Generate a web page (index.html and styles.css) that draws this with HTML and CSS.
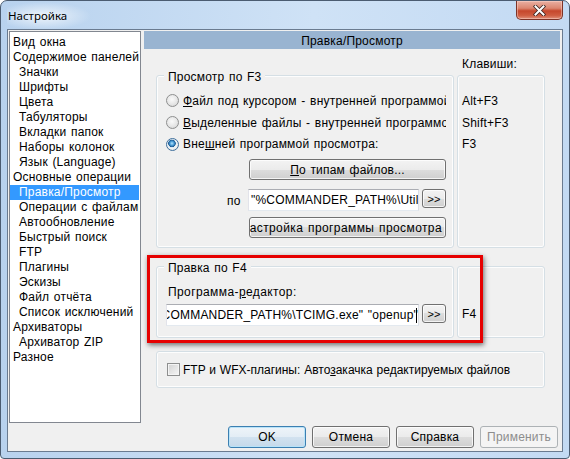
FILE: index.html
```html
<!DOCTYPE html>
<html>
<head>
  <meta charset="utf-8">
  <title>Настройка</title>
  <link rel="stylesheet" href="styles.css">
</head>
<body>

  <div class="window">
    <div class="titlebar">
      <span class="title">Настройка</span>
      <button class="close" title="Закрыть">
        <svg width="13" height="11" viewBox="0 0 13 11">
          <path d="M2.5 1.5 L10.5 9.5 M10.5 1.5 L2.5 9.5" stroke="#3a2420" stroke-width="3.6" stroke-linecap="square"/>
          <path d="M2.5 1.5 L10.5 9.5 M10.5 1.5 L2.5 9.5" stroke="#fff" stroke-width="2" stroke-linecap="square"/>
        </svg>
      </button>
    </div>

    <div class="client">
      <div class="main">
        <ul class="tree">
          <li>Вид окна</li>
          <li>Содержимое панелей</li>
          <li class="sub">Значки</li>
          <li class="sub">Шрифты</li>
          <li class="sub">Цвета</li>
          <li class="sub">Табуляторы</li>
          <li class="sub">Вкладки папок</li>
          <li class="sub">Наборы колонок</li>
          <li class="sub">Язык (Language)</li>
          <li>Основные операции</li>
          <li class="sub selected">Правка/Просмотр</li>
          <li class="sub">Операции с файлами</li>
          <li class="sub">Автообновление</li>
          <li class="sub">Быстрый поиск</li>
          <li class="sub">FTP</li>
          <li class="sub">Плагины</li>
          <li class="sub">Эскизы</li>
          <li class="sub">Файл отчёта</li>
          <li class="sub">Список исключений</li>
          <li>Архиваторы</li>
          <li class="sub">Архиватор ZIP</li>
          <li>Разное</li>
        </ul>

        <div class="page">
          <div class="page-head">Правка/Просмотр</div>

          <div class="page-body">
            <div class="keys-label">Клавиши:</div>

            <div class="group group-f3">
              <div class="group-title">Просмотр по F3</div>
              <div class="opt first"><span class="radio"></span><span><u>Ф</u>айл под курсором - внутренней программой</span></div>
              <div class="opt"><span class="radio"></span><span><u>В</u>ыделенные файлы - внутренней программой</span></div>
              <div class="opt"><span class="radio on"></span><span>Вне<u>ш</u>ней программой просмотра:</span></div>
              <button class="btn wide types"><u>П</u>о типам файлов...</button>
              <div class="path-row">
                <span class="by">по</span>
                <div class="edit edit-f3">"%COMMANDER_PATH%\Utilities\Universal Viewer\Viewer.exe"</div>
                <button class="btn more">&gt;&gt;</button>
              </div>
              <button class="btn wide clip"><span>Настройка программы просмотра</span></button>
            </div>

            <div class="keys keys-f3">
              <div>Alt+F3</div>
              <div>Shift+F3</div>
              <div>F3</div>
            </div>

            <div class="group group-f4">
              <div class="group-title">Правка по F4</div>
              <div class="f4-label">Программа-<u>р</u>едактор:</div>
              <div class="path-row">
                <div class="edit edit-f4"><span>"%COMMANDER_PATH%\TCIMG.exe" "openup"</span><span class="caret"></span></div>
                <button class="btn more">&gt;&gt;</button>
              </div>
            </div>

            <div class="keys keys-f4">
              <div>F4</div>
            </div>

            <div class="group group-ftp">
              <span class="check"></span>
              <span>FTP и WFX-плагины: Авто<u>з</u>акачка редактируемых файлов</span>
            </div>
          </div>
        </div>
      </div>

      <div class="buttons">
        <button class="btn default">OK</button>
        <button class="btn">Отмена</button>
        <button class="btn">Справка</button>
        <button class="btn" disabled>Применить</button>
      </div>
    </div>

    <!-- red frame drawn over the F4 section -->
    <div class="callout"></div>
  </div>

</body>
</html>
```

FILE: styles.css
```css
* {
  box-sizing: border-box;
}

body {
  margin: 0;
  background: #fff;
  font-family: "Liberation Sans", Arial, sans-serif;
  font-size: 12px;
  letter-spacing: 0.2px;
  word-spacing: 1px;
  color: #000;
}

u {
  text-decoration-thickness: 1px;
  text-underline-offset: 1px;
}

/* window frame */

.window {
  position: relative;
  width: 570px;
  height: 459px;
  display: flex;
  flex-direction: column;
  padding: 0 6px 6px;
  border: 1px solid #4b5c71;
  border-radius: 7px 7px 4px 4px;
  background: linear-gradient(to right, #b8d2ee, #cfe2f6 55%, #c3daf3);
}

.titlebar {
  height: 28px;
  display: flex;
  justify-content: space-between;
  align-items: flex-start;
  background: radial-gradient(ellipse 48px 14px at 36px 15px, rgba(255, 255, 255, 0.75), rgba(255, 255, 255, 0));
}

.title {
  margin: 7px 0 0 1px;
  font-family: "Noto Sans", sans-serif;
  font-size: 11.5px;
  line-height: 16px;
  letter-spacing: 0;
  word-spacing: 0;
  color: #000;
}

.close {
  width: 47px;
  height: 19px;
  padding: 0;
  display: flex;
  align-items: center;
  justify-content: center;
  border: 1px solid #7d3327;
  border-top: none;
  border-radius: 0 0 5px 5px;
  background: linear-gradient(#eab0a3, #dc8670 40%, #c6472c 55%, #cf5d41 80%, #e0917b);
  box-shadow: inset 0 0 0 1px rgba(255, 220, 210, 0.45);
}

.client {
  flex: 1;
  display: flex;
  flex-direction: column;
  border: 1px solid #6a7b90;
  background: #f0f0f0;
}

.main {
  display: flex;
  margin-top: 1px;
  height: 392px;
}

/* left list */

.tree {
  margin: 0 0 0 1px;
  padding: 3px 0 0;
  width: 132px;
  height: 392px;
  list-style: none;
  overflow: hidden;
  border: 1px solid #828790;
  background: #fff;
}

.tree li {
  height: 15px;
  line-height: 15px;
  margin-right: 1px;
  padding-left: 3px;
  white-space: nowrap;
  overflow: hidden;
}

.tree li.sub {
  padding-left: 9px;
}

.tree li.selected {
  background: #3399ff;
  color: #fff;
}

/* right page */

.page {
  margin-left: 3px;
  width: 416px;
}

.page-head {
  height: 18px;
  padding-top: 3px;
  line-height: 15px;
  text-align: center;
  background: #99b4d1;
}

.page-body {
  display: grid;
  grid-template-columns: 298px 88px;
  column-gap: 3px;
  padding-left: 12px;
}

.keys-label {
  grid-column: 2;
  height: 26px;
  padding: 8px 0 0 5px;
  line-height: 14px;
}

.group,
.keys {
  border: 1px solid #d5dfe5;
  border-radius: 3px;
  box-shadow: inset 0 0 0 1px #fdfdfd;
}

.group-title {
  width: fit-content;
  margin: -6px 0 0 -2px;
  padding: 0 4px;
  line-height: 14px;
  background: #f0f0f0;
}

.group-f3 {
  height: 173px;
  padding-left: 9px;
}

.opt {
  display: flex;
  align-items: center;
  gap: 4px;
  width: 280px;
  height: 21.7px;
  white-space: nowrap;
  overflow: hidden;
}

.opt.first {
  margin-top: 6px;
}

.radio {
  flex: none;
  width: 13px;
  height: 13px;
  border-radius: 50%;
  border: 1px solid #8e8f8f;
  background: radial-gradient(circle at 45% 40%, #fafafa, #e6e6e6 55%, #cdcdcd);
}

.radio.on {
  border-color: #3f6f9c;
  background: radial-gradient(circle at 45% 40%, #b7e3fb 0, #4c9ed8 2px, #1d5a92 3.5px, #d9e7f2 4px, #f4f4f4 5px, #cfcfcf);
}

.check {
  flex: none;
  width: 13px;
  height: 13px;
  border: 1px solid #8e8f8f;
  background: linear-gradient(135deg, #d2d2d2, #f6f6f6);
  box-shadow: inset 0 0 0 1px #f4f4f4;
}

.btn {
  font: inherit;
  font-weight: normal;
  letter-spacing: inherit;
  word-spacing: inherit;
  color: #000;
  padding: 0;
  border: 1px solid #707070;
  border-radius: 3px;
  background: linear-gradient(#f3f3f3, #ebebeb 50%, #dddddd 50%, #cfcfcf);
  box-shadow: inset 0 0 0 1px rgba(255, 255, 255, 0.75);
}

.btn.wide {
  width: 197px;
  height: 21px;
  margin-left: 83px;
}

.btn.types {
  margin-top: 4px;
}

.btn.clip {
  margin-top: 6px;
  display: flex;
  align-items: center;
  justify-content: flex-end;
  padding-right: 3px;
  overflow: hidden;
  white-space: nowrap;
}

.btn.clip span {
  flex: none;
  letter-spacing: 0.4px;
}

.btn.more {
  width: 24px;
  height: 19px;
  font-size: 11px;
}

.path-row {
  display: flex;
  align-items: flex-start;
  gap: 3px;
}

.group-f3 .path-row {
  margin: 9px 0 0 61px;
}

.by {
  width: 18px;
  padding-top: 5px;
  line-height: 14px;
}

.edit {
  height: 22px;
  padding: 0 2px;
  line-height: 20px;
  white-space: nowrap;
  overflow: hidden;
  border: 1px solid;
  border-color: #abadb3 #dbdfe6 #e3e9ef #e2e3ea;
  background: #fff;
}

.edit-f3 {
  width: 171px;
}

.edit-f4 {
  width: 253px;
  display: flex;
  align-items: center;
  justify-content: flex-end;
  padding-right: 1px;
}

.edit-f4 span {
  flex: none;
}

.caret {
  width: 1px;
  height: 15px;
  margin-left: -2px;
  background: #000;
}

.keys {
  padding-left: 4px;
}

.keys-f3 {
  padding-top: 15px;
}

.keys-f3 div {
  line-height: 21.7px;
}

.group-f4 {
  margin-top: 18px;
  height: 72px;
  padding-left: 9px;
}

.f4-label {
  margin: 10px 0 0 2px;
  line-height: 14px;
  letter-spacing: 0.4px;
}

.group-f4 .path-row {
  margin-top: 5px;
}

.keys-f4 {
  margin-top: 18px;
  height: 72px;
  padding-top: 40px;
  line-height: 14px;
}

.group-ftp {
  grid-column: 1 / -1;
  margin-top: 13px;
  height: 37px;
  display: flex;
  align-items: center;
  gap: 3px;
  padding-left: 10px;
  letter-spacing: 0;
  word-spacing: 0.5px;
}

/* bottom buttons */

.buttons {
  display: flex;
  justify-content: flex-end;
  gap: 6px;
  margin-top: 3px;
  padding-right: 4px;
}

.buttons .btn {
  width: 78px;
  height: 22px;
}

.btn.default {
  border-color: #3c7fb1;
  background: linear-gradient(#eef4f9, #e3edf5 50%, #d2e2ef 50%, #c5d9ea);
  box-shadow: inset 0 0 0 1px #b9e3f8;
}

.btn:disabled {
  color: #8d8d8d;
  border-color: #adb2b5;
  background: #f4f4f4;
  box-shadow: none;
}

.callout {
  position: absolute;
  left: 146px;
  top: 254px;
  width: 336px;
  height: 88px;
  border: 3px solid #e60000;
  box-shadow: 1px 2px 5px rgba(0, 0, 0, 0.55);
}
```
